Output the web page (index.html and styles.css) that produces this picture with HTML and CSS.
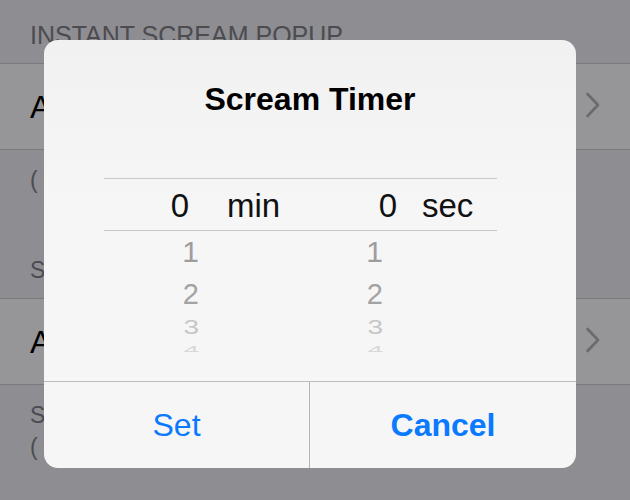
FILE: index.html
```html
<!DOCTYPE html>
<html>
<head>
<meta charset="utf-8">
<link rel="stylesheet" href="styles.css">
</head>
<body>
<div class="screen">
  <div class="settings">
    <div class="hdr hdr-first">INSTANT SCREAM POPUP</div>
    <div class="cell">
      <span class="cell-label">Alert Sound</span>
      <svg class="chev" width="16" height="26" viewBox="0 0 16 26"><path d="M2.5 2 L13 13 L2.5 24" fill="none" stroke="#6b6b6e" stroke-width="2.6" stroke-linecap="round" stroke-linejoin="round"/></svg>
    </div>
    <div class="foot foot-first">(&nbsp;&nbsp;Tap to choose a scream)</div>
    <div class="hdr hdr-second">SCREAM TIMER</div>
    <div class="cell">
      <span class="cell-label">After Delay</span>
      <svg class="chev" width="16" height="26" viewBox="0 0 16 26"><path d="M2.5 2 L13 13 L2.5 24" fill="none" stroke="#6b6b6e" stroke-width="2.6" stroke-linecap="round" stroke-linejoin="round"/></svg>
    </div>
    <div class="foot foot-second">Scream after the chosen time<br>(&nbsp;&nbsp;minutes and seconds)</div>
  </div>

  <div class="dialog">
    <div class="dlg-title">Scream Timer</div>
    <div class="picker">
      <div class="band">
        <span class="num">0</span>
        <span class="unit unit-min">min</span>
        <span class="num">0</span>
        <span class="unit unit-sec">sec</span>
      </div>
      <div class="wheel">
        <div class="wrow r1"><span class="wn">1</span><span class="wn">1</span></div>
        <div class="wrow r2"><span class="wn">2</span><span class="wn">2</span></div>
        <div class="wrow r3"><span class="wn"><span class="sq">3</span></span><span class="wn"><span class="sq">3</span></span></div>
        <div class="wrow r4"><span class="wn"><span class="sq">4</span></span><span class="wn"><span class="sq">4</span></span></div>
      </div>
    </div>
    <div class="buttons">
      <div class="btn btn-set">Set</div>
      <div class="btn btn-cancel">Cancel</div>
    </div>
  </div>
</div>
</body>
</html>
```

FILE: styles.css
```css
* { box-sizing: border-box; }
html, body {
  margin: 0;
  padding: 0;
  width: 630px;
  height: 500px;
  overflow: hidden;
  background: #8d8d92;
  font-family: "Liberation Sans", Arial, Helvetica, sans-serif;
}
.screen {
  position: relative;
  width: 630px;
  height: 500px;
}

/* background settings list (dimmed) */
.settings {
  display: flex;
  flex-direction: column;
}
.hdr {
  font-size: 24px;
  line-height: 30px;
  color: #4b4b50;
  padding-left: 30px;
  white-space: nowrap;
}
.hdr-first {
  height: 63px;
  padding-top: 20px;
  font-size: 25px;
}
.hdr-second {
  padding-top: 60px;
  padding-bottom: 13px;
  font-size: 23px;
}
.cell {
  height: 87px;
  border-top: 1px solid #7a7a7e;
  border-bottom: 1px solid #7a7a7e;
  background: #969698;
  display: flex;
  align-items: center;
  justify-content: space-between;
  padding: 0 29px 0 30px;
}
.cell-label {
  font-size: 32px;
  line-height: 38px;
  color: #000;
}
.chev { display: block; margin-top: -3px; }
.foot {
  font-size: 23px;
  color: #4b4b50;
  padding-left: 30px;
  white-space: nowrap;
}
.foot-first {
  padding-top: 15px;
  line-height: 30px;
}
.foot-second {
  padding-top: 14px;
  line-height: 32px;
}

/* alert dialog */
.dialog {
  position: absolute;
  left: 44px;
  top: 40px;
  width: 532px;
  height: 428px;
  border-radius: 14px;
  background: linear-gradient(180deg, #f1f1f1 0%, #f6f6f6 40%, #f6f6f6 100%);
  overflow: hidden;
  display: flex;
  flex-direction: column;
}
.dlg-title {
  height: 138px;
  padding-top: 40px;
  text-align: center;
  font-size: 32px;
  line-height: 38px;
  font-weight: bold;
  color: #000;
}
.picker {
  height: 204px;
  margin-left: 60px;
  width: 393px;
}
.band {
  height: 53px;
  border-top: 1px solid #c8c8cb;
  border-bottom: 1px solid #c8c8cb;
  display: grid;
  grid-template-columns: 85px 123px 85px 1fr;
  padding-top: 2px;
  font-size: 33px;
  line-height: 49px;
  color: #111;
}
.num { text-align: right; }
.unit-min { padding-left: 38px; }
.unit-sec { padding-left: 25px; }

.wheel {
  height: 121px;
  overflow: hidden;
}
.wrow {
  display: grid;
  grid-template-columns: 95px 184px;
}
.wn { text-align: right; }
.r1 { height: 42px; font-size: 30px; line-height: 42px; color: #9d9d9e; }
.r2 { height: 40px; padding-top: 2px; font-size: 29px; line-height: 38px; color: #a3a3a4; }
.r3 { height: 30px; font-size: 28px; line-height: 30px; color: #c6c6c7; }
.r4 { height: 14px; font-size: 28px; line-height: 14px; color: #d8d8d9; }
.sq { display: inline-block; }
.r3 .sq { transform: scaleY(0.72); }
.r4 .sq { transform: scaleY(0.4); }

.buttons {
  flex: 1;
  display: grid;
  grid-template-columns: 266px 1fr;
  border-top: 1px solid #bcbcc0;
}
.btn {
  text-align: center;
  font-size: 32px;
  line-height: 85px;
  padding-top: 1px;
  color: #0a7aff;
}
.btn-set { border-right: 1px solid #b4b4b8; }
.btn-cancel { font-weight: bold; }
```
